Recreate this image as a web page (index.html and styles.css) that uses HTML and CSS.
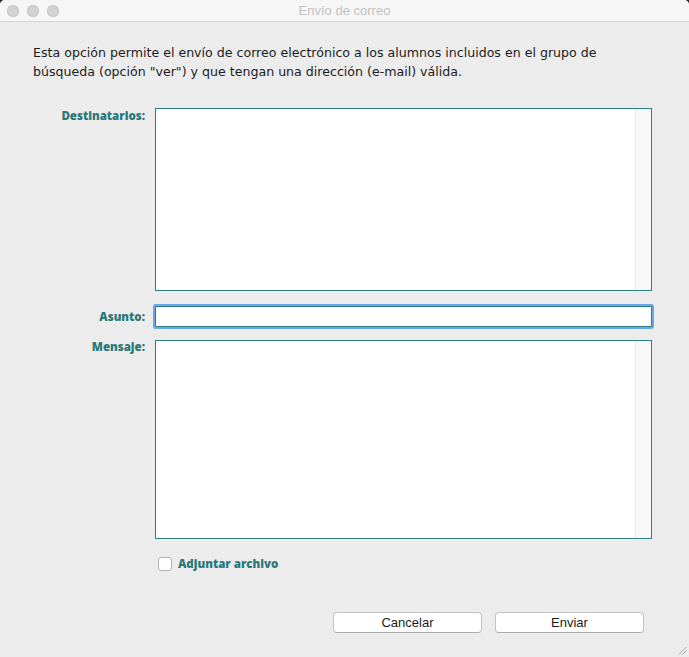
FILE: index.html
```html
<!DOCTYPE html>
<html lang="es">
<head>
  <meta charset="UTF-8" />
  <title>Envío de correo</title>
  <link rel="stylesheet" href="styles.css">
</head>
<body>
  <div class="window">
    <!-- Title bar -->
    <div class="titlebar">
      <div class="lights">
        <span class="light"></span>
        <span class="light"></span>
        <span class="light"></span>
      </div>
      <div class="title">Envío de correo</div>
    </div>

    <div class="content">
      <p class="intro">
        Esta opción permite el envío de correo electrónico a los alumnos incluidos en el grupo de<br>
        búsqueda (opción "ver") y que tengan una dirección (e-mail) válida.
      </p>

      <div class="form">
        <div class="row row-dest">
          <label class="field-label">Destinatarios:</label>
          <div class="text-box dest-box">
            <div class="text-area"></div>
            <div class="track"></div>
          </div>
        </div>

        <div class="row row-subject">
          <label class="field-label" for="subject">Asunto:</label>
          <input class="subject-input" id="subject" type="text">
        </div>

        <div class="row row-msg">
          <label class="field-label">Mensaje:</label>
          <div class="text-box msg-box">
            <div class="text-area"></div>
            <div class="track"></div>
          </div>
        </div>

        <div class="row row-attach">
          <span class="field-label"></span>
          <label class="attach">
            <span class="check"></span>
            Adjuntar archivo
          </label>
        </div>
      </div>

      <div class="buttons">
        <button class="btn">Cancelar</button>
        <button class="btn">Enviar</button>
      </div>
    </div>

    <svg class="grip" width="10" height="10" viewBox="0 0 10 10">
      <line x1="9.5" y1="2" x2="2" y2="9.5" stroke="#a8a8a8" stroke-width="1"/>
      <line x1="9.5" y1="5.5" x2="5.5" y2="9.5" stroke="#a8a8a8" stroke-width="1"/>
    </svg>
  </div>
</body>
</html>
```

FILE: styles.css
```css
/* ==========================
   PAGE & WINDOW
=========================== */
body {
  margin: 0;
  padding: 0;
  background: #2b2b2b;
  font-family: 'DejaVu Sans', 'Liberation Sans', sans-serif;
}

.window {
  position: relative;
  width: 689px;
  height: 657px;
  background: #ececec;
  border-radius: 5px 5px 0 0;
  overflow: hidden;
}

/* ==========================
   TITLE BAR
=========================== */
.titlebar {
  height: 21px;
  background: #f6f6f6;
  border-bottom: 1px solid #d4d4d4;
  display: flex;
  align-items: center;
  position: relative;
}

.lights {
  display: flex;
  gap: 8px;
  padding-left: 7px;
}

.light {
  width: 12px;
  height: 12px;
  border-radius: 50%;
  background: #d3d3d3;
  box-shadow: inset 0 0 0 1px #c6c6c6;
}

.title {
  position: absolute;
  left: 0;
  right: 0;
  top: 3px;
  text-align: center;
  font-family: 'Liberation Sans', Arial, sans-serif;
  font-size: 13px;
  color: #c2c2c2;
}

/* ==========================
   CONTENT
=========================== */
.intro {
  margin: 21px 0 0 33px;
  font-size: 12.6px;
  line-height: 19px;
  color: #1c1c1c;
}

.form {
  margin-top: 27px;
}

.row {
  display: flex;
  align-items: flex-start;
}

.field-label {
  width: 145px;
  flex: none;
  text-align: right;
  font-family: 'Open Sans', 'Lato', sans-serif;
  font-weight: 800;
  font-size: 11.5px;
  color: #2b7878;
  margin-right: 10px;
}

.text-box {
  width: 497px;
  box-sizing: border-box;
  border: 1px solid #2b7f7f;
  background: #fff;
  display: flex;
}

.dest-box {
  height: 183px;
}

.msg-box {
  height: 199px;
}

.text-area {
  flex: 1;
}

.track {
  width: 15px;
  background: #f8f8f8;
  border-left: 1px solid #e6e6e6;
}

/* ==========================
   SUBJECT
=========================== */
.row-subject {
  margin-top: 15px;
  align-items: center;
}

.subject-input {
  width: 497px;
  height: 21px;
  box-sizing: border-box;
  margin: 0;
  border: 1px solid #2b7f7f;
  background: #fff;
  box-shadow: 0 0 0 2px #6ea4e8;
  border-radius: 1px;
  outline: none;
  font-size: 12px;
}

.row-msg {
  margin-top: 13px;
}

.row-msg .field-label {
  margin-top: -1px;
}

/* ==========================
   ATTACHMENT
=========================== */
.row-attach {
  margin-top: 17px;
}

.attach {
  display: flex;
  align-items: center;
  gap: 6px;
  margin-left: 3px;
  font-family: 'Open Sans', 'Lato', sans-serif;
  font-weight: 800;
  font-size: 11.5px;
  color: #2b7878;
}

.check {
  width: 12px;
  height: 12px;
  border: 1px solid #b3b3b3;
  border-radius: 3px;
  background: #fff;
}

/* ==========================
   BUTTONS
=========================== */
.buttons {
  display: flex;
  gap: 13px;
  margin: 41px 0 0 333px;
}

.btn {
  width: 149px;
  height: 21px;
  padding: 0;
  background: #fff;
  border: 1px solid #c2c2c2;
  border-bottom-color: #acacac;
  border-radius: 4px;
  font-family: 'Liberation Sans', Arial, sans-serif;
  font-size: 13px;
  color: #1a1a1a;
}

.grip {
  position: absolute;
  right: 2px;
  bottom: 2px;
}
```
